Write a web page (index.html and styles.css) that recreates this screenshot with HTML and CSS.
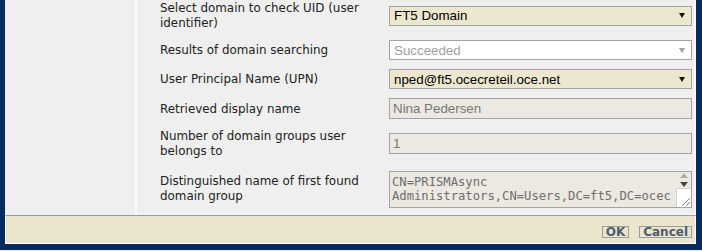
FILE: index.html
```html
<!doctype html>
<html lang="en">
  <head>
    <meta charset="UTF-8" />
    <title>Domain UID check</title>
    <link rel="stylesheet" href="styles.css">
  </head>
  <body>
    <div class="frame">
      <div class="main">
        <!-- Left panel -->
        <div class="side"></div>

        <!-- Form -->
        <div class="content">
          <div class="form">
            <div class="label">Select domain to check UID (user identifier)</div>
            <div class="select">
              <span>FT5 Domain</span>
              <svg class="arrow" width="6" height="5" viewBox="0 0 6 5"><polygon points="0,0 6,0 3,5" fill="#111" /></svg>
            </div>

            <div class="label">Results of domain searching</div>
            <div class="select disabled">
              <span>Succeeded</span>
              <svg class="arrow" width="6" height="5" viewBox="0 0 6 5"><polygon points="0,0 6,0 3,5" fill="#a0a0a0" /></svg>
            </div>

            <div class="label">User Principal Name (UPN)</div>
            <div class="select">
              <span>nped@ft5.ocecreteil.oce.net</span>
              <svg class="arrow" width="6" height="5" viewBox="0 0 6 5"><polygon points="0,0 6,0 3,5" fill="#111" /></svg>
            </div>

            <div class="label">Retrieved display name</div>
            <div class="input">Nina Pedersen</div>

            <div class="label">Number of domain groups user belongs to</div>
            <div class="input">1</div>

            <div class="label">Distinguished name of first found domain group</div>
            <div class="textarea">
              <div class="textarea-text">CN=PRISMAsync Administrators,CN=Users,DC=ft5,DC=ocec</div>
              <div class="scroll">
                <div class="scroll-arrows">
                  <svg width="8" height="5" viewBox="0 0 8 5"><polygon points="0,5 8,5 4,0" fill="#b0b0b0" /></svg>
                  <svg width="8" height="5" viewBox="0 0 8 5"><polygon points="0,0 8,0 4,5" fill="#444" /></svg>
                </div>
                <div class="grip">
                  <svg width="9" height="9" viewBox="0 0 9 9">
                    <line x1="1" y1="9" x2="9" y2="1" stroke="#888" stroke-width="1" />
                    <line x1="5" y1="9" x2="9" y2="5" stroke="#888" stroke-width="1" />
                  </svg>
                </div>
              </div>
            </div>
          </div>
        </div>
      </div>

      <!-- Footer buttons -->
      <div class="footer">
        <button class="btn">OK</button>
        <button class="btn">Cancel</button>
      </div>
    </div>
  </body>
</html>
```

FILE: styles.css
```css
* {
  margin: 0;
  padding: 0;
  box-sizing: border-box;
}

body {
  background: #e8e8e8;
  font-family: "DejaVu Sans", Verdana, sans-serif;
  overflow: hidden;
}

.frame {
  height: 250px;
  background: #062c5e;
  padding: 0 6px 6px 5px;
  display: flex;
  flex-direction: column;
}

.main {
  height: 215px;
  display: flex;
  overflow: hidden;
}

.side {
  width: 132px;
  background: #efefef;
  border-right: 2px solid #fbfbfb;
}

.content {
  flex: 1;
  background: #efefef;
  border-right: 2px solid #fafafa;
  border-bottom: 1px solid #fafafa;
  padding: 0 0 0 23px;
}

.form {
  display: grid;
  grid-template-columns: 205px 303px;
  column-gap: 24px;
  row-gap: 9px;
  align-items: center;
}

.label {
  font-size: 11.9px;
  line-height: 15px;
  color: #222;
  padding-top: 1px;
}

.select,
.input {
  display: flex;
  align-items: center;
  border: 1px solid #a3a3a3;
  font-family: "Liberation Sans", Arial, sans-serif;
  font-size: 13.33px;
  padding-left: 4px;
}

.select {
  height: 20px;
  background: #ede7cf;
  color: #000;
  justify-content: space-between;
}

.select .arrow {
  margin-right: 6px;
}

.select.disabled {
  background: #fff;
  color: #a0a0a0;
}

.input {
  height: 21px;
  background: #ebe9e1;
  color: #777;
  padding-left: 3px;
}

.textarea {
  height: 37px;
  margin-top: 3px;
  display: flex;
  border: 1px solid #a3a3a3;
  background: #ebe9e1;
}

.textarea-text {
  flex: 1;
  padding: 3px 0 0 2px;
  font-family: "DejaVu Sans Mono", Consolas, monospace;
  font-size: 12.2px;
  line-height: 14px;
  color: #6e6e6e;
  overflow: hidden;
}

.scroll {
  width: 15px;
  display: flex;
  flex-direction: column;
}

.scroll-arrows {
  height: 16px;
  display: flex;
  flex-direction: column;
  align-items: center;
  justify-content: center;
  gap: 4px;
}

.grip {
  flex: 1;
  background: #fff;
  border-left: 1px solid #d4d4d4;
  border-top: 1px solid #d4d4d4;
  display: flex;
  align-items: flex-end;
  justify-content: flex-end;
  padding: 0 1px 1px 0;
}

.footer {
  height: 29px;
  background: #ebe5cd;
  border-top: 1px solid #8a9eb6;
  border-left: 1px solid #fff;
  border-bottom: 1px solid #fff;
  border-right: 1px solid #fff;
  display: flex;
  justify-content: flex-end;
  gap: 10px;
  padding: 10px 3px 0 0;
}

.btn {
  height: 12px;
  font-family: "DejaVu Sans", Verdana, sans-serif;
  font-weight: bold;
  font-size: 12px;
  line-height: 10px;
  padding: 0 3px;
  border: 1px solid #9c9c9c;
  background: #ebe5cd;
  color: #4e5c6b;
  cursor: pointer;
}
```
